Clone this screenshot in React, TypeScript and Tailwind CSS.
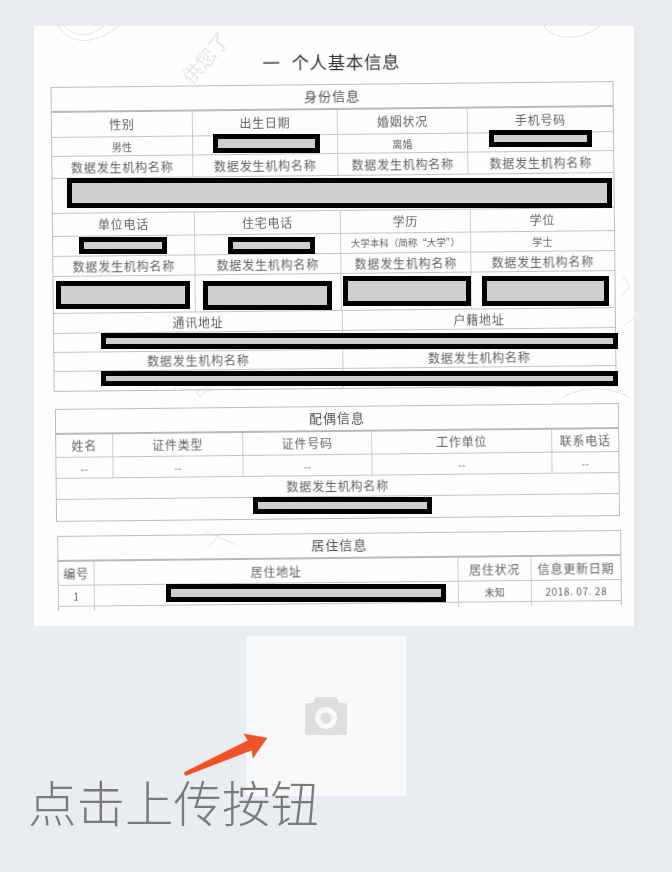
const font = { fontFamily: '"Noto Sans CJK SC", "Liberation Sans", sans-serif' };

function Cell({ children, size = 'text-[12px] tracking-[0.8px]', last = false }: { children?: React.ReactNode; size?: string; last?: boolean }) {
  return (
    <div className={`flex items-center justify-center whitespace-nowrap text-[#5f5f5f] ${size} ${last ? '' : 'border-r border-[#cccccc]'}`}>
      {children}
    </div>
  );
}

function Row({ h, cols, children, last = false }: { h: string; cols: string; children?: React.ReactNode; last?: boolean }) {
  return <div className={`grid box-border ${h} ${cols} ${last ? '' : 'border-b border-[#c4c4c4]'}`}>{children}</div>;
}

function Heading({ children }: { children: React.ReactNode }) {
  return (
    <div className="flex h-[25px] items-center justify-center border-b-2 border-[#b8b8b8] pb-[2px] text-[13px] tracking-[1px] text-[#4f4f4f]">
      {children}
    </div>
  );
}

const c4a = 'grid-cols-[141px_145px_130px_1fr]';
const c4b = 'grid-cols-[142px_146px_130px_1fr]';
const c2 = 'grid-cols-[289px_1fr]';
const c5 = 'grid-cols-[57px_130px_129px_180px_1fr]';
const c4c = 'grid-cols-[36px_364px_73px_1fr]';
const small = 'text-[10px] tracking-[0.3px]';
const org = '数据发生机构名称';

const redactions = [
  'left-[179px] top-[108px] w-[107px] h-[19px] border-[5px]',
  'left-[455px] top-[104px] w-[103px] h-[17px] border-[5px]',
  'left-[33px] top-[152px] w-[545px] h-[30px] border-[5px]',
  'left-[45px] top-[211px] w-[88px] h-[17px] border-[5px]',
  'left-[194px] top-[211px] w-[87px] h-[17px] border-[5px]',
  'left-[22px] top-[255px] w-[134px] h-[28px] border-[5px]',
  'left-[169px] top-[255px] w-[129px] h-[29px] border-[5px]',
  'left-[309px] top-[250px] w-[128px] h-[30px] border-[5px]',
  'left-[448px] top-[250px] w-[127px] h-[30px] border-[5px]',
  'left-[67px] top-[307px] w-[517px] h-[16px] border-[5px]',
  'left-[67px] top-[345px] w-[517px] h-[15px] border-[5px]',
  'left-[219px] top-[471px] w-[179px] h-[17px] border-[5px]',
  'left-[132px] top-[558px] w-[280px] h-[18px] border-[5px]',
];

export default function App() {
  return (
    <div className="min-h-[872px] w-[672px] overflow-hidden bg-[#e9edf2] pt-[26px]" style={font}>
      <div className="relative ml-[34px] h-[600px] w-[600px] overflow-hidden bg-[#fdfefd]">
        <svg className="absolute left-0 top-0" width="600" height="600" fill="none" stroke="#e4e7e7" strokeWidth="1">
          <path d="M24 0 C32 14 55 24 84 0" />
          <path d="M30 0 C38 9 52 14 70 0" />
          <path d="M510 0 C520 14 545 16 566 0" />
          <path d="M588 250 l8 10 l-8 10 M590 300 l10 -8" />
          <path d="M140 362 C155 352 190 350 205 362" />
          <path d="M305 364 l22 -18 M120 365 l18 -18" />
          <path d="M528 372 C545 360 580 360 596 372" />
          <path d="M175 520 l14 -14 M172 505 l30 14" />
          <text x="158" y="60" fill="#e6e9e9" stroke="none" fontSize="20" transform="rotate(-50 158 60)">供您了</text>
          <text x="165" y="372" fill="#e4e7e7" stroke="none" fontSize="9" transform="rotate(-35 165 372)">CREDIT</text>
        </svg>

        <div className="relative h-full w-full rotate-[-0.6deg] blur-[0.35px]">
          <div className="flex h-[58px] items-center justify-center pt-[14px] text-[17.5px] tracking-[0.6px] text-[#333333]">
            <span className="mr-[11px]">一</span>个人基本信息
          </div>

          <div className="ml-[19px] w-[563px] border border-[#bcbcbc]">
            <Heading>身份信息</Heading>
            <Row h="h-[25px]" cols={c4a}><Cell>性别</Cell><Cell>出生日期</Cell><Cell>婚姻状况</Cell><Cell last>手机号码</Cell></Row>
            <Row h="h-[19px]" cols={c4a}><Cell size={small}>男性</Cell><Cell /><Cell size={small}>离婚</Cell><Cell last /></Row>
            <Row h="h-[22px]" cols={c4a}><Cell>{org}</Cell><Cell>{org}</Cell><Cell>{org}</Cell><Cell last>{org}</Cell></Row>
            <Row h="h-[35px]" cols="grid-cols-1"><Cell last /></Row>
            <Row h="h-[23px]" cols={c4b}><Cell>单位电话</Cell><Cell>住宅电话</Cell><Cell>学历</Cell><Cell last>学位</Cell></Row>
            <Row h="h-[20px]" cols={c4b}><Cell /><Cell /><Cell size="text-[9.5px]">大学本科（简称“大学”）</Cell><Cell last size={small}>学士</Cell></Row>
            <Row h="h-[20px]" cols={c4b}><Cell>{org}</Cell><Cell>{org}</Cell><Cell>{org}</Cell><Cell last>{org}</Cell></Row>
            <Row h="h-[37px]" cols={c4b}><Cell /><Cell /><Cell /><Cell last /></Row>
            <Row h="h-[20px]" cols={c2}><Cell>通讯地址</Cell><Cell last>户籍地址</Cell></Row>
            <Row h="h-[19px]" cols={c2}><Cell /><Cell last /></Row>
            <Row h="h-[19px]" cols={c2}><Cell>{org}</Cell><Cell last>{org}</Cell></Row>
            <Row h="h-[19px]" cols={c2} last><Cell /><Cell last /></Row>
          </div>

          <div className="ml-[20px] mt-[17px] w-[564px] border border-[#bcbcbc]">
            <Heading>配偶信息</Heading>
            <Row h="h-[23px]" cols={c5}><Cell>姓名</Cell><Cell>证件类型</Cell><Cell>证件号码</Cell><Cell>工作单位</Cell><Cell last>联系电话</Cell></Row>
            <Row h="h-[21px]" cols={c5}><Cell size={small}>--</Cell><Cell size={small}>--</Cell><Cell size={small}>--</Cell><Cell size={small}>--</Cell><Cell last size={small}>--</Cell></Row>
            <Row h="h-[21px]" cols="grid-cols-1"><Cell last>{org}</Cell></Row>
            <Row h="h-[21px]" cols="grid-cols-1" last><Cell last /></Row>
          </div>

          <div className="ml-[21px] mt-[14px] w-[564px] border-x border-t border-[#bcbcbc]">
            <Heading>居住信息</Heading>
            <Row h="h-[24px]" cols={c4c}><Cell>编号</Cell><Cell>居住地址</Cell><Cell>居住状况</Cell><Cell last>信息更新日期</Cell></Row>
            <Row h="h-[21px]" cols={c4c}><Cell size={small}>1</Cell><Cell /><Cell size={small}>未知</Cell><Cell last size="text-[10px] tracking-[0.6px]">2018. 07. 28</Cell></Row>
            <Row h="h-[4px]" cols={c4c} last><Cell /><Cell /><Cell /><Cell last /></Row>
          </div>
        </div>

        {redactions.map((r) => (
          <div key={r} className={`absolute box-border border-black bg-[#cfcfcf] blur-[0.3px] ${r}`} />
        ))}
      </div>

      <div className="relative ml-[246px] mt-[10px] flex h-40 w-40 items-center justify-center bg-[#f7f8fa]">
        <svg width="44" height="40" viewBox="0 0 44 40">
          <path
            d="M9 7 L10.5 3 Q11.5 1 14 1 H30 Q32.5 1 33.5 3 L35 7 H40.5 Q43 7 43 9.5 V36.5 Q43 39 40.5 39 H3.5 Q1 39 1 36.5 V9.5 Q1 7 3.5 7 Z"
            fill="#dcdee0"
          />
          <circle cx="22" cy="22" r="11" fill="#f7f8fa" />
          <circle cx="22" cy="22" r="5.5" fill="#dcdee0" />
        </svg>
        <svg className="absolute left-[-66px] top-[94px]" width="92" height="50" viewBox="0 0 92 50">
          <path
            d="M87 8 L64 4 L68 10.5 L5 42 Q3.5 44.5 6 45.5 L72 20 L73 28 Z"
            fill="#f15223"
            stroke="#f15223"
            strokeWidth="0.5"
            strokeLinejoin="round"
          />
        </svg>
      </div>

      <div className="relative ml-[28px] mt-[-28px] h-[66px] whitespace-nowrap text-[48.5px] font-light leading-[66px] text-[#7a7a7a]">
        点击上传按钮
      </div>
    </div>
  );
}
